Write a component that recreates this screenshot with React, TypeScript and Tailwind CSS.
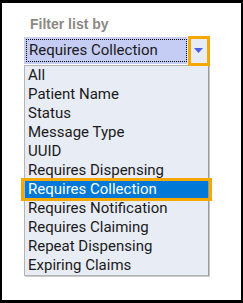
const options = [
  "All",
  "Patient Name",
  "Status",
  "Message Type",
  "UUID",
  "Requires Dispensing",
  "Requires Collection",
  "Requires Notification",
  "Requires Claiming",
  "Repeat Dispensing",
  "Expiring Claims",
];

const selected = "Requires Collection";

export default function App() {
  return (
    <div className="w-[243px] h-[303px] bg-black pt-[3px] pb-[3px] px-[2px]">
      <div className="h-full bg-white pl-[22px] pt-[12px] font-['Roboto',sans-serif]">
        <div className="pl-[6px] h-[18px] leading-[18px] text-[14px] font-bold text-[#8c8884] font-['Liberation_Sans',sans-serif]">
          Filter list by
        </div>
        <div className="relative mt-[4px] w-[185px] h-[27px] flex bg-[#c6cdf4]">
          <div className="flex-1 m-[2px] mr-0 border border-dotted border-black flex items-center pl-[2px] text-[15px] text-[#1a1a1a] leading-none">
            {selected}
          </div>
          <div className="w-[22px] bg-[#e8ecf5] flex items-center justify-center">
            <svg width="9" height="5" viewBox="0 0 9 5">
              <path d="M0 0 H9 L4.5 5 Z" fill="#4a5ee6" />
            </svg>
          </div>
          <div className="absolute left-[164px] -top-[1px] w-[22px] h-[30px] border-[3px] border-[#f5a800]" />
        </div>
        <ul className="mt-[1px] w-[185px] bg-[#e8ecf5] border border-[#b4b4b4] border-r-[#9a9a9a] shadow-[1px_1px_0_#c8c8c8] text-[15px] text-[#1a1a1a]">
          {options.map((o) => (
            <li
              key={o}
              className={
                o === selected
                  ? "relative h-[19px] leading-[19px] pl-[3px] bg-[#0078d7] text-white"
                  : "h-[19px] leading-[19px] pl-[3px]"
              }
            >
              {o}
              {o === selected && (
                <span className="absolute -left-[4px] -right-[4px] -top-[2px] -bottom-[2px] border-[3px] border-[#f5a800]" />
              )}
            </li>
          ))}
        </ul>
      </div>
    </div>
  );
}
